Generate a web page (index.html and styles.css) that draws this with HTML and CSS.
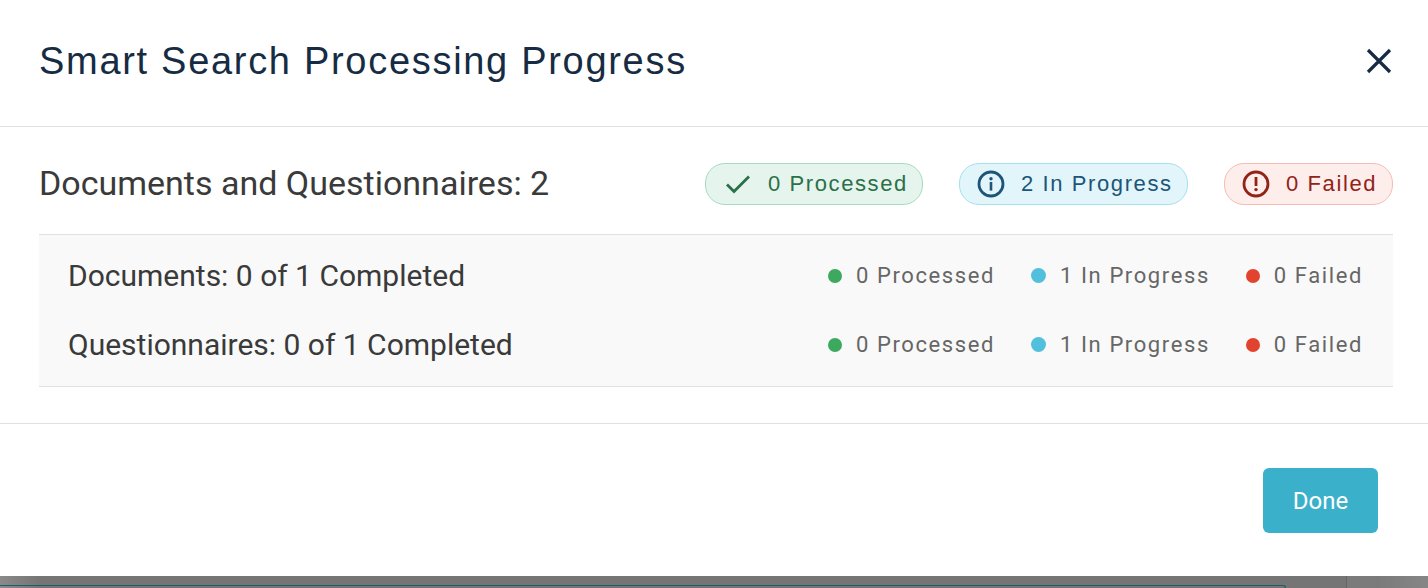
FILE: index.html
```html
<!DOCTYPE html>
<html lang="en">
<head>
<meta charset="utf-8">
<title>Smart Search Processing Progress</title>
<link rel="stylesheet" href="styles.css">
</head>
<body>
<div class="page">
  <main class="modal">
    <header class="modal-header">
      <h1 class="title">Smart Search Processing Progress</h1>
      <button class="close" aria-label="Close">
        <svg width="26" height="26" viewBox="0 0 26 26"><path d="M2 2 L24 24 M24 2 L2 24" fill="none" stroke="#162c43" stroke-width="3.2"/></svg>
      </button>
    </header>
    <section class="modal-body">
      <div class="summary">
        <h2 class="summary-title">Documents and Questionnaires: 2</h2>
        <div class="badges">
          <span class="badge badge-green">
            <svg class="badge-icon" width="28" height="28" viewBox="0 0 28 28"><path d="M3 14.5 L10 21.5 L25 6.5" fill="none" stroke="#2a7048" stroke-width="2.8"/></svg>
            0 Processed
          </span>
          <span class="badge badge-blue">
            <svg class="badge-icon" width="28" height="28" viewBox="0 0 28 28"><circle cx="14" cy="14" r="12" fill="none" stroke="#1c5577" stroke-width="2.8"/><circle cx="14" cy="8.8" r="1.7" fill="#1c5577"/><rect x="12.7" y="12" width="2.6" height="8.6" fill="#1c5577"/></svg>
            2 In Progress
          </span>
          <span class="badge badge-red">
            <svg class="badge-icon" width="28" height="28" viewBox="0 0 28 28"><circle cx="14" cy="14" r="12" fill="none" stroke="#932217" stroke-width="2.8"/><rect x="12.6" y="7" width="2.8" height="9" fill="#932217"/><circle cx="14" cy="19.6" r="1.7" fill="#932217"/></svg>
            0 Failed
          </span>
        </div>
      </div>
      <div class="details">
        <div class="row">
          <span class="row-title">Documents: 0 of 1 Completed</span>
          <div class="stats">
            <span class="stat stat-processed"><i class="dot dot-green"></i>0 Processed</span>
            <span class="stat stat-progress"><i class="dot dot-blue"></i>1 In Progress</span>
            <span class="stat stat-failed"><i class="dot dot-red"></i>0 Failed</span>
          </div>
        </div>
        <div class="row">
          <span class="row-title">Questionnaires: 0 of 1 Completed</span>
          <div class="stats">
            <span class="stat stat-processed"><i class="dot dot-green"></i>0 Processed</span>
            <span class="stat stat-progress"><i class="dot dot-blue"></i>1 In Progress</span>
            <span class="stat stat-failed"><i class="dot dot-red"></i>0 Failed</span>
          </div>
        </div>
      </div>
    </section>
    <footer class="modal-footer">
      <button class="done">Done</button>
    </footer>
  </main>
  <div class="backdrop"><div class="backdrop-line"></div></div>
</div>
</body>
</html>
```
FILE: styles.css
```css
* { box-sizing: border-box; }
html, body { margin: 0; height: 100%; overflow: hidden; }
body { background: #fff; font-family: Roboto, "Liberation Sans", sans-serif; }
.page { height: 588px; display: flex; flex-direction: column; }
.modal { height: 576px; flex: none; background: #fff; display: flex; flex-direction: column; }
.modal-header {
  height: 127px;
  padding: 0 36px 4px 39px;
  border-bottom: 1px solid #e0e0e0;
  display: flex;
  align-items: center;
  justify-content: space-between;
}
.title { margin: 0; font-family: "Liberation Sans", Arial, sans-serif; font-size: 38px; font-weight: 400; letter-spacing: 1.7px; color: #162c43; }
.close { border: 0; background: none; padding: 0; display: flex; }
.modal-body { height: 297px; padding: 0 35px 0 39px; border-bottom: 1px solid #e0e0e0; }
.summary { height: 108px; border-bottom: 1px solid #e0e0e0; display: flex; align-items: center; justify-content: space-between; padding-top: 6px; }
.summary-title { margin: 0 0 2px; font-size: 34px; font-weight: 400; color: #3a3a3a; }
.badges { display: flex; gap: 36px; }
.badge {
  height: 42px;
  border: 1px solid;
  border-radius: 20px;
  display: flex;
  align-items: center;
  font-family: "Liberation Sans", Arial, sans-serif;
  font-size: 22px;
  letter-spacing: 1.6px;
}
.badge-icon { margin-right: 16px; }
.badge-green { width: 218px; padding-left: 18px; background: #e6f4ee; border-color: #a5dcc0; color: #2a7048; }
.badge-blue { width: 229px; padding-left: 17px; background: #e2f5fb; border-color: #a5e0ee; color: #1c5577; }
.badge-red { width: 169px; padding-left: 17px; background: #fdeeec; border-color: #f6bbb4; color: #932217; }
.details { height: 152px; background: #f9f9f9; border-bottom: 1px solid #e0e0e0; padding: 23px 30px 0 29px; display: flex; flex-direction: column; gap: 34px; }
.row { height: 35px; display: flex; align-items: center; justify-content: space-between; }
.row-title { font-size: 30px; color: #3a3a3a; }
.stats { display: flex; gap: 36px; font-size: 22px; letter-spacing: 1.6px; color: #666; }
.stat { display: flex; align-items: center; }
.dot { width: 14px; height: 14px; border-radius: 50%; margin-right: 14px; }
.dot-green { background: #3ca95f; }
.dot-blue { width: 15px; height: 15px; background: #52c0dc; }
.dot-red { background: #e1432f; }
.modal-footer { flex: 1; display: flex; align-items: flex-start; justify-content: flex-end; padding: 44px 50px 0 0; }
.done {
  width: 115px; height: 65px; border: 0; border-radius: 6px;
  background: #3ab0cb; color: #fff;
  font-family: Roboto, sans-serif; font-size: 24px; font-weight: 400;
}
.backdrop {
  flex: 1;
  padding-top: 9px;
  background: linear-gradient(to right, #8a8a8a 0, #757575 40px, #757575 1346px, #666 1346px, #666 1347px, #7b7b7b 1347px, #7b7b7b 1376px, #7a7a7a 1376px, #868686 1428px);
}
.backdrop-line { height: 3px; width: 1286px; border-top: 1px solid #1c5c6e; border-right: 1px solid #1c5c6e; border-top-right-radius: 3px; }
```
